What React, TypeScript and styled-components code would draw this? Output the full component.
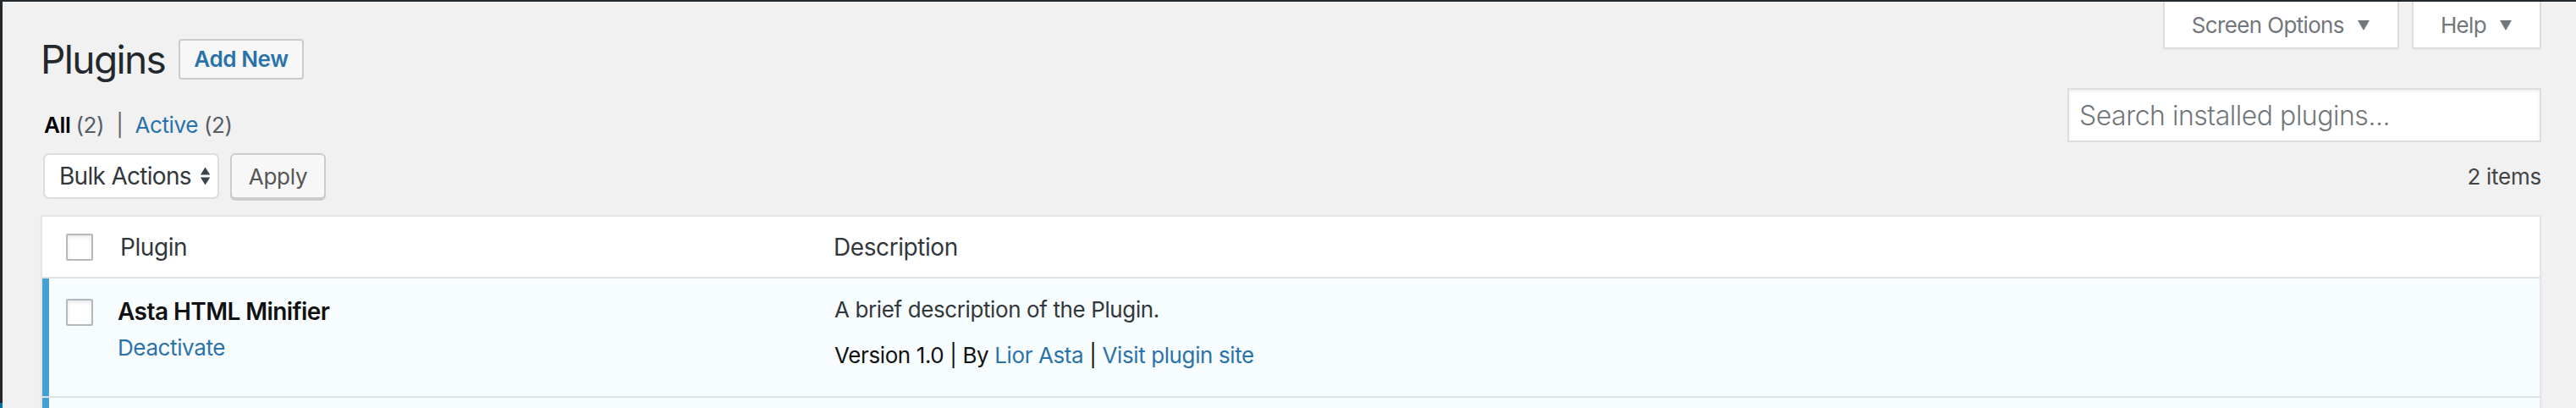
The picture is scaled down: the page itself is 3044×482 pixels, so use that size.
import React from 'react';
import styled, { createGlobalStyle } from 'styled-components';

const FONT = `Inter, "Open Sans", "Liberation Sans", sans-serif`;

const GlobalStyle = createGlobalStyle`
  html, body {
    margin: 0;
    padding: 0;
    background: #f1f1f1;
  }
  body {
    overflow: hidden;
  }
`;

// the whole admin screen is drawn at 2x, like the retina capture
const Page = styled.div`
  zoom: 2;
  width: 1522px;
  height: 241px;
  display: flex;
  background: #f1f1f1;
  border-top: 1px solid #23282d;
  box-sizing: border-box;
  font-family: ${FONT};
  color: #23282d;
  overflow: hidden;
`;

const AdminEdge = styled.div`
  width: 1.5px;
  flex-shrink: 0;
  background: linear-gradient(to bottom, #23282d 237px, #0073aa 237px);
`;

const Content = styled.div`
  flex: 1;
  min-width: 0;
  padding: 0 20.5px 0 22.5px;
  display: flex;
  flex-direction: column;
`;

const TopRow = styled.div`
  display: flex;
  justify-content: space-between;
  align-items: flex-start;
  height: 49px;
`;

const TitleGroup = styled.div`
  display: flex;
  align-items: center;
  gap: 8px;
  padding-top: 19px;
`;

const Title = styled.h1`
  margin: 0;
  font-size: 23px;
  font-weight: 400;
  line-height: 30px;
  letter-spacing: -0.035em;
  color: #23282d;
`;

const TitleAction = styled.a`
  display: inline-block;
  padding: 4px 8px;
  border: 1px solid #cccccc;
  border-radius: 2px;
  background: #f7f7f7;
  color: #2a73aa;
  font-size: 13px;
  font-weight: 600;
  line-height: 14px;
  letter-spacing: -0.015em;
  text-decoration: none;
`;

const Tabs = styled.div`
  display: flex;
  gap: 7.5px;
`;

const Tab = styled.button`
  display: flex;
  align-items: center;
  gap: 8px;
  height: 28px;
  padding: 0 16.5px 0 16px;
  background: #fff;
  border: 1px solid #dddddd;
  border-top: none;
  box-shadow: 0 1px 1px -1px rgba(0, 0, 0, 0.1);
  font-family: ${FONT};
  font-size: 13px;
  color: #72777c;
  letter-spacing: -0.025em;
  cursor: pointer;
`;

const Caret = styled.span`
  width: 0;
  height: 0;
  border-left: 3.5px solid transparent;
  border-right: 3.5px solid transparent;
  border-top: 6px solid #72777c;
  margin-top: 1px;
`;

const FilterBar = styled.div`
  display: flex;
  justify-content: space-between;
  align-items: flex-end;
  margin-top: 2px;
`;

const Views = styled.ul`
  list-style: none;
  margin: 0 0 1px 2px;
  padding: 0;
  display: flex;
  font-size: 13px;
  line-height: 18px;
  letter-spacing: -0.015em;
  color: #555d66;
`;

const ViewItem = styled.li`
  white-space: pre;
`;

const ViewLink = styled.a<{ $current?: boolean }>`
  color: ${(p) => (p.$current ? '#000' : '#2a73aa')};
  font-weight: ${(p) => (p.$current ? 600 : 400)};
  text-decoration: none;
`;

const Count = styled.span`
  color: #555d66;
  font-weight: 400;
`;

const Separator = styled.span`
  padding: 0 7px 0 7px;
  color: #666;
`;

const SearchInput = styled.input`
  width: 280px;
  height: 32px;
  box-sizing: border-box;
  margin: 0;
  padding: 3px 6px;
  border: 1px solid #dddddd;
  background: #fff;
  box-shadow: inset 0 1px 2px rgba(0, 0, 0, 0.07);
  font-family: ${FONT};
  font-size: 16px;
  font-weight: 300;
  letter-spacing: -0.015em;
  color: #32373c;
  outline: none;

  &::placeholder {
    color: #72777c;
  }
`;

const TableNav = styled.div`
  display: flex;
  justify-content: space-between;
  align-items: center;
  padding: 6.5px 0 9.5px 1.5px;
`;

const BulkGroup = styled.div`
  display: flex;
  align-items: flex-start;
  gap: 6.5px;
`;

const SelectBox = styled.div`
  display: flex;
  align-items: center;
  gap: 5px;
  width: 104px;
  height: 27px;
  box-sizing: border-box;
  padding: 0 4px 0 8.5px;
  background: #fff;
  border: 1px solid #dddddd;
  border-radius: 3.5px;
  font-size: 14px;
  color: #32373c;
  letter-spacing: -0.025em;
  white-space: nowrap;
`;

const SelectText = styled.span`
  flex: 1;
`;

const SecondaryButton = styled.button`
  width: 56.5px;
  height: 27px;
  padding: 0;
  background: #f7f7f7;
  border: 1px solid #cccccc;
  border-radius: 3px;
  box-shadow: 0 1px 0 #cccccc;
  font-family: ${FONT};
  font-size: 13px;
  color: #555;
  letter-spacing: -0.01em;
  cursor: pointer;
`;

const ItemCount = styled.span`
  font-size: 13px;
  color: #444;
  letter-spacing: -0.01em;
`;

const COLUMNS = '36.5px 421.5px 1fr';

const Table = styled.div`
  background: #fff;
  border: 1px solid #e5e5e5;
  border-bottom: none;
  box-shadow: 0 1px 1px rgba(0, 0, 0, 0.04);
`;

const HeadRow = styled.div`
  display: grid;
  grid-template-columns: ${COLUMNS};
  align-items: center;
  height: 35.5px;
  border-bottom: 1px solid #e1e1e1;
`;

const HeadCell = styled.div`
  padding: 0 10px 0 9.5px;
  font-size: 14px;
  color: #32373c;
  letter-spacing: -0.015em;
`;

const CheckCell = styled.div<{ $active?: boolean }>`
  display: flex;
  align-self: stretch;
  align-items: ${(p) => (p.$active ? 'flex-start' : 'center')};
  padding-top: ${(p) => (p.$active ? '12px' : '0')};
  padding-left: ${(p) => (p.$active ? '10px' : '14px')};
  border-left: ${(p) => (p.$active ? '4px solid #45a0d3' : 'none')};
`;

const Checkbox = styled.input.attrs({ type: 'checkbox' })`
  appearance: none;
  width: 16px;
  height: 16px;
  margin: 0;
  border: 1px solid #b4b9be;
  border-radius: 1px;
  background: #fff;
  box-shadow: inset 0 1px 2px rgba(0, 0, 0, 0.1);
`;

const PluginRow = styled.div<{ $active?: boolean }>`
  display: grid;
  grid-template-columns: ${COLUMNS};
  min-height: 69.5px;
  background: ${(p) => (p.$active ? '#f7fcfe' : '#fff')};
  box-shadow: inset 0 -1px 0 rgba(0, 0, 0, 0.1);
  padding-bottom: 1px;
`;

const PluginCell = styled.div`
  padding: 10px 10px 0 8px;
`;

const PluginName = styled.strong`
  display: block;
  font-size: 14px;
  font-weight: 600;
  line-height: 19px;
  color: #111;
  letter-spacing: -0.02em;
`;

const RowActions = styled.div`
  margin-top: 3px;
  font-size: 13px;
  line-height: 18px;
  letter-spacing: -0.015em;
`;

const Link = styled.a`
  color: #2a73aa;
  text-decoration: none;
`;

const DescCell = styled.div`
  padding: 9.5px 10px 15px 10px;
  font-size: 13px;
  line-height: 18px;
  letter-spacing: -0.015em;
`;

const DescText = styled.p`
  margin: 0 0 9px;
  color: #32373c;
`;

const Meta = styled.div`
  color: #111;
`;

const SortArrows = () => (
  <svg width="7.5" height="13" viewBox="0 0 7.5 13" aria-hidden="true">
    <path d="M3.75 0.5 L7 5.6 L0.5 5.6 Z" fill="#3c434a" />
    <path d="M0.5 7.4 L7 7.4 L3.75 12.5 Z" fill="#3c434a" />
  </svg>
);

export default function App() {
  return (
    <>
      <GlobalStyle />
      <Page>
        <AdminEdge />
        <Content>
          <TopRow>
            <TitleGroup>
              <Title>Plugins</Title>
              <TitleAction href="#">Add New</TitleAction>
            </TitleGroup>
            <Tabs>
              <Tab>
                Screen Options <Caret />
              </Tab>
              <Tab>
                Help <Caret />
              </Tab>
            </Tabs>
          </TopRow>

          <FilterBar>
            <Views>
              <ViewItem>
                <ViewLink href="#" $current>
                  All <Count>(2)</Count>
                </ViewLink>
                <Separator>|</Separator>
              </ViewItem>
              <ViewItem>
                <ViewLink href="#">
                  Active <Count>(2)</Count>
                </ViewLink>
              </ViewItem>
            </Views>
            <SearchInput placeholder="Search installed plugins..." />
          </FilterBar>

          <TableNav>
            <BulkGroup>
              <SelectBox>
                <SelectText>Bulk Actions</SelectText>
                <SortArrows />
              </SelectBox>
              <SecondaryButton>Apply</SecondaryButton>
            </BulkGroup>
            <ItemCount>2 items</ItemCount>
          </TableNav>

          <Table>
            <HeadRow>
              <CheckCell>
                <Checkbox />
              </CheckCell>
              <HeadCell>Plugin</HeadCell>
              <HeadCell>Description</HeadCell>
            </HeadRow>
            <PluginRow $active>
              <CheckCell $active>
                <Checkbox />
              </CheckCell>
              <PluginCell>
                <PluginName>Asta HTML Minifier</PluginName>
                <RowActions>
                  <Link href="#">Deactivate</Link>
                </RowActions>
              </PluginCell>
              <DescCell>
                <DescText>A brief description of the Plugin.</DescText>
                <Meta>
                  Version 1.0 | By <Link href="#">Lior Asta</Link> |{' '}
                  <Link href="#">Visit plugin site</Link>
                </Meta>
              </DescCell>
            </PluginRow>
            <PluginRow $active>
              <CheckCell $active>
                <Checkbox />
              </CheckCell>
            </PluginRow>
          </Table>
        </Content>
      </Page>
    </>
  );
}
